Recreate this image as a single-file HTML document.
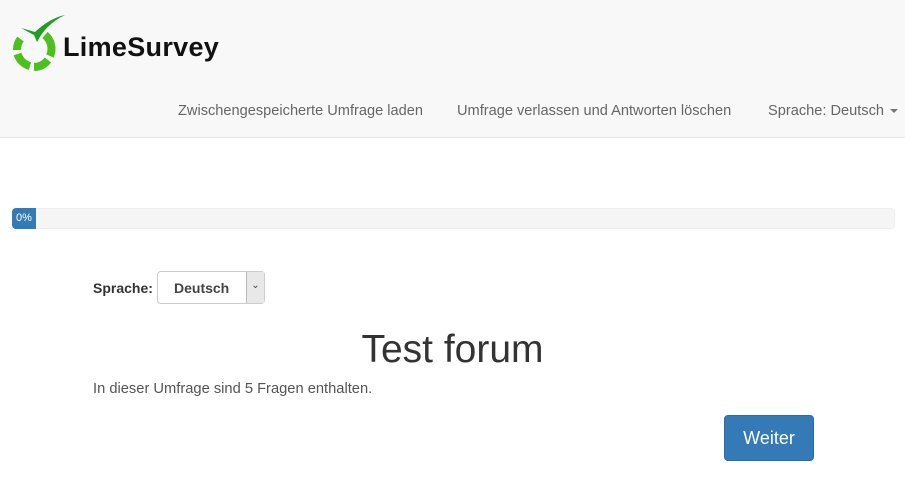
<!DOCTYPE html>
<html><head><meta charset="utf-8"><style>
body{margin:0;width:905px;height:502px;background:#fff;font-family:"Liberation Sans",sans-serif;color:#333;position:relative;overflow:hidden}
.hdr{position:absolute;left:0;top:0;width:905px;height:137px;background:#f8f8f8;border-bottom:1px solid #e7e7e7}
.logo{position:absolute;left:10px;top:12px}
.brand{position:absolute;left:63px;top:32px;font-size:27px;color:#111;font-weight:bold;letter-spacing:0.3px}
.nav{position:absolute;top:103px;font-size:14.6px;color:#666;white-space:nowrap}
.caret{display:inline-block;border-top:4px solid #777;border-left:4px solid transparent;border-right:4px solid transparent;vertical-align:middle;margin-left:6px}
.prog{position:absolute;left:12px;top:208px;width:883px;height:21px;background:#f5f5f5;border:1px solid #eee;border-radius:4px;box-sizing:border-box}
.bar{position:absolute;left:-1px;top:-1px;width:24px;height:21px;background:#337ab7;border-radius:4px 0 0 4px;color:#fff;font-size:11px;line-height:20px;text-align:center}
.lbl{position:absolute;left:93px;top:280px;font-size:14px;font-weight:bold}
.sel{position:absolute;left:157px;top:271px;width:108px;height:33px;border:1px solid #ccc;border-radius:4px;box-sizing:border-box;font-size:14px;font-weight:bold;line-height:33px;padding-left:16px;color:#444}
.arr{position:absolute;right:0;top:0;width:17px;height:31px;background:#e8e8e8;border-left:1px solid #bbb;font-size:10px;text-align:center;font-weight:normal;padding:0;line-height:28px}
.title{position:absolute;left:0;width:905px;text-align:center;top:328px;font-size:39px;color:#333}
.desc{position:absolute;left:93px;top:381px;font-size:14.7px;color:#555}
.btn{position:absolute;left:724px;top:415px;width:90px;height:46px;background:#337ab7;border:1px solid #2e6da4;border-radius:4px;box-sizing:border-box;color:#fff;font-size:18px;text-align:center;line-height:44px}
</style></head><body>
<div class="hdr">
<svg class="logo" width="56" height="62" viewBox="0 0 56 62">
<g fill="none" stroke="#4cc01c" stroke-width="8">
<path d="M10.5 27 A18 18 0 0 0 7 38"/>
<path d="M7.5 42 A18 18 0 0 0 20 54"/>
<path d="M24 55 A18 18 0 0 0 38 48"/>
<path d="M40 44 A18 18 0 0 0 35 23"/>
</g>
<path d="M11 16 L24 23 L27 30 Q36 12 55 3 Q40 6 25 20 Z" fill="#1f9e1f"/>
</svg>
<div class="brand">LimeSurvey</div>
<div class="nav" style="left:178px">Zwischengespeicherte Umfrage laden</div>
<div class="nav" style="left:457px">Umfrage verlassen und Antworten löschen</div>
<div class="nav" style="left:768px">Sprache: Deutsch<span class="caret"></span></div>
</div>
<div class="prog"><div class="bar">0%</div></div>
<div class="lbl">Sprache:</div>
<div class="sel">Deutsch<div class="arr">&#8964;</div></div>
<div class="title">Test forum</div>
<div class="desc">In dieser Umfrage sind 5 Fragen enthalten.</div>
<div class="btn">Weiter</div>
</body></html>
